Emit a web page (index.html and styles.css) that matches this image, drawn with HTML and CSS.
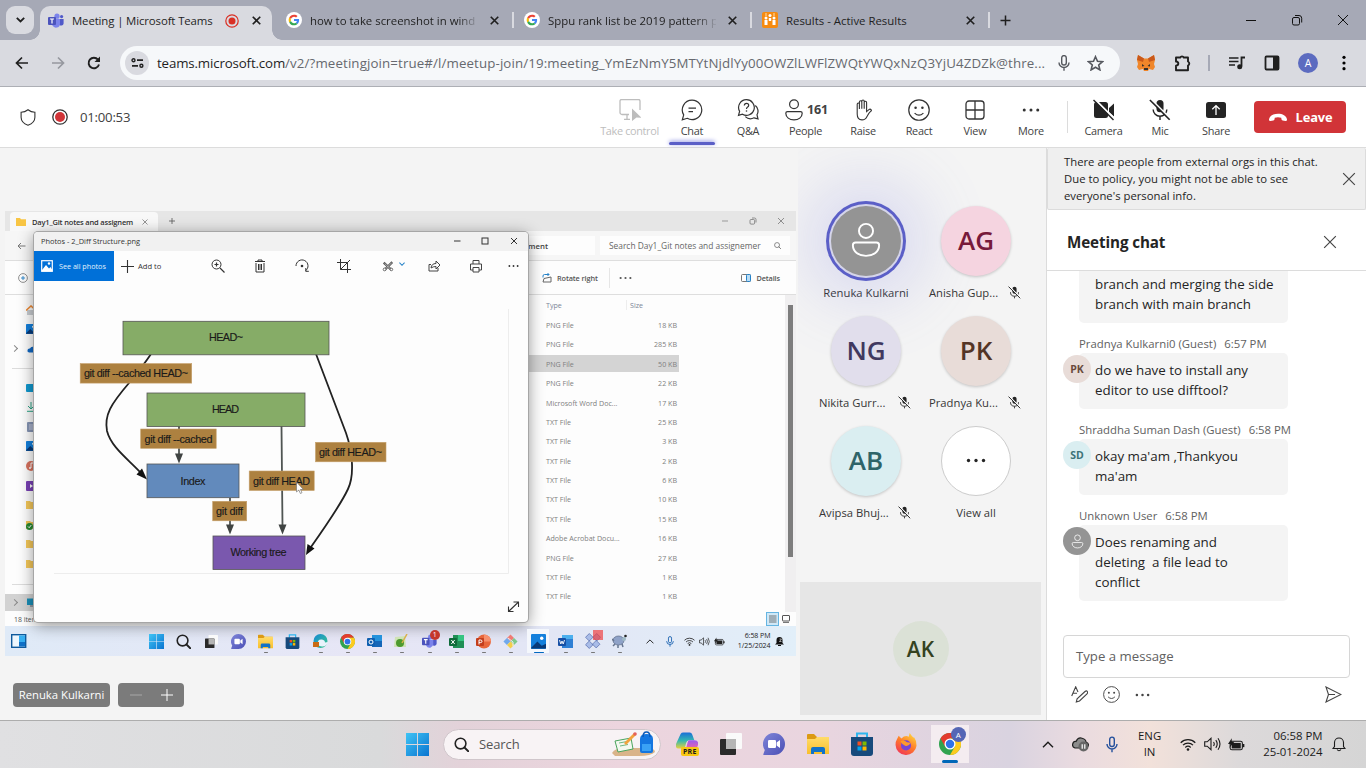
FILE: index.html
```html
<!DOCTYPE html>
<html lang="en">
<head>
<meta charset="utf-8">
<title>Meeting | Microsoft Teams</title>
<link rel="stylesheet" href="styles.css">
</head>
<body>
<svg class="sprite" width="0" height="0">
  <defs>
    <linearGradient id="winGrad" x1="0" y1="0" x2="1" y2="1"><stop offset="0" stop-color="#3fc4f5"/><stop offset="1" stop-color="#0a74d0"/></linearGradient>
    <linearGradient id="meetGrad" x1="0" y1="0" x2="1" y2="1"><stop offset="0" stop-color="#7f85d8"/><stop offset="1" stop-color="#4a4fb5"/></linearGradient>
    <linearGradient id="folderGrad" x1="0" y1="0" x2="0" y2="1"><stop offset="0" stop-color="#ffdc6a"/><stop offset="1" stop-color="#f9bf2c"/></linearGradient>
    <linearGradient id="foxGrad" x1="0.8" y1="0" x2="0.2" y2="1"><stop offset="0" stop-color="#ffd83d"/><stop offset=".5" stop-color="#ff7a2a"/><stop offset="1" stop-color="#f0325a"/></linearGradient>
    <linearGradient id="edgeGrad" x1="0" y1="0" x2="1" y2="1"><stop offset="0" stop-color="#1688d4"/><stop offset="1" stop-color="#3bc98a"/></linearGradient>
  </defs>
  <symbol id="google" viewBox="-12 -12 72 72"><circle cx="24" cy="24" r="36" fill="#fff"/><path fill="#EA4335" d="M24 9.5c3.54 0 6.71 1.22 9.21 3.6l6.85-6.85C35.9 2.38 30.47 0 24 0 14.62 0 6.51 5.38 2.56 13.22l7.98 6.19C12.43 13.72 17.74 9.5 24 9.5z"/><path fill="#4285F4" d="M46.98 24.55c0-1.57-.15-3.09-.38-4.55H24v9.02h12.94c-.58 2.96-2.26 5.48-4.78 7.18l7.73 6c4.51-4.18 7.09-10.36 7.09-17.65z"/><path fill="#FBBC05" d="M10.53 28.59c-.48-1.45-.76-2.99-.76-4.59s.27-3.14.76-4.59l-7.98-6.19C.92 16.46 0 20.12 0 24c0 3.88.92 7.54 2.56 10.78l7.97-6.19z"/><path fill="#34A853" d="M24 48c6.48 0 11.93-2.13 15.89-5.81l-7.73-6c-2.15 1.45-4.92 2.3-8.16 2.3-6.26 0-11.57-4.22-13.47-9.91l-7.98 6.19C6.51 42.62 14.62 48 24 48z"/></symbol>
  <symbol id="teams" viewBox="0 0 16 16"><circle cx="9" cy="3.2" r="2.6" fill="#7b83eb"/><circle cx="13.6" cy="3.6" r="1.6" fill="#5059c9"/><path d="M11 6h4.6v4.4a2.5 2.5 0 0 1-4.6 1z" fill="#5059c9"/><path d="M4.5 6H12v5a4 4 0 0 1-7.5 1.6z" fill="#7b83eb"/><rect x="0" y="4" width="8" height="8" rx="1" fill="#4b53bc"/><path d="M2 6h4M4 6v4.4" stroke="#fff" stroke-width="1.2"/></symbol>
  <symbol id="x" viewBox="0 0 12 12"><path d="M1 1l10 10M11 1L1 11" fill="none" stroke="currentColor"/></symbol>
  <symbol id="micoff" viewBox="0 0 20 20"><rect x="6.8" y="1" width="6.4" height="11" rx="3.2" fill="#242424"/><path d="M3.8 9.5a6.2 6.2 0 0 0 12.4 0M10 15.8V19" fill="none" stroke="#242424" stroke-width="1.3"/><path d="M2 0.4L19.8 18.2" stroke="#fff" stroke-width="1.6"/><path d="M.8.9l18 18" stroke="#242424" stroke-width="1.5"/></symbol>
  <symbol id="person" viewBox="0 0 20 22"><circle cx="10" cy="5.3" r="4.4" fill="none" stroke="currentColor" stroke-width="1.2"/><path d="M3.5 12.6h13q1.7 0 1.7 1.7c0 4-3.6 6.6-8.2 6.6s-8.2-2.600-8.200-6.600q0-1.700 1.700-1.700z" fill="none" stroke="currentColor" stroke-width="1.2"/></symbol>
  <symbol id="dots" viewBox="0 0 16 4"><circle cx="2" cy="2" r="1.35" fill="currentColor"/><circle cx="8" cy="2" r="1.35" fill="currentColor"/><circle cx="14" cy="2" r="1.35" fill="currentColor"/></symbol>
  <symbol id="smile" viewBox="0 0 20 20"><circle cx="10" cy="10" r="9.300" fill="none" stroke="currentColor" stroke-width="1.1"/><circle cx="6.900" cy="8" r="1.150" fill="currentColor"/><circle cx="13.100" cy="8" r="1.150" fill="currentColor"/><path d="M6 12.800q4 3.800 8 0" fill="none" stroke="currentColor" stroke-width="1.100"/></symbol>
  <symbol id="windows" viewBox="0 0 24 24"><path d="M0 0h11.500v11.500H0zM12.500 0H24v11.500H12.500zM0 12.500h11.500V24H0zM12.500 12.500H24V24H12.500z" fill="url(#winGrad)"/></symbol>
  <symbol id="lens" viewBox="0 0 16 16"><circle cx="7" cy="7" r="5.700" fill="none" stroke="currentColor" stroke-width="1.700"/><path d="M11.200 11.200l4 4" stroke="currentColor" stroke-width="1.900" stroke-linecap="round"/></symbol>
  <symbol id="taskview" viewBox="0 0 22 22"><rect x="6" y="0" width="16" height="16" rx="1" fill="#fafafa"/><rect x="0" y="6" width="16" height="16" rx="1" fill="#2a2a2a"/><path d="M6 6h10v10H6z" fill="#b5b5b5"/></symbol>
  <symbol id="meet" viewBox="0 0 22 22"><path d="M11 0a11 11 0 0 1 0 22H1q-1 0-.6-1L1.800 17A11 11 0 0 1 11 0z" fill="url(#meetGrad)"/><rect x="5" y="7" width="8" height="8" rx="1.300" fill="#fff"/><path d="M13.600 9.500L17 7v8l-3.400-2.500z" fill="#fff"/></symbol>
  <symbol id="folder" viewBox="0 0 22 22"><path d="M0 2q0-1 1-1h6l3 3h11q1 0 1 1v5H0z" fill="#dc9a13"/><path d="M0 6h8l2-2h12v17H0z" fill="url(#folderGrad)"/><path d="M4 21v-5q0-2 2-2h10q2 0 2 2v5h-3v-2H7v2z" fill="#1272c8"/></symbol>
  <symbol id="store" viewBox="0 0 22 24"><path d="M6 6V1.500h10V6" fill="none" stroke="#2fb5ee" stroke-width="2"/><path d="M0 5h22v16q0 3-3 3H3q-3 0-3-3z" fill="#174a7c"/><path d="M6.500 9.500h4v4h-4z" fill="#f25022"/><path d="M11.500 9.500h4v4h-4z" fill="#7fba00"/><path d="M6.500 14.500h4v4h-4z" fill="#00a4ef"/><path d="M11.500 14.500h4v4h-4z" fill="#ffb900"/></symbol>
  <symbol id="chrome" viewBox="0 0 24 24"><circle cx="12" cy="12" r="12" fill="#30a350"/><path d="M12 12V6h10.400A12 12 0 0 0 1.600 6l5.200 9z" fill="#e33b2e"/><path d="M12 6h10.400A12 12 0 0 1 12 24l5.200-9z" fill="#fccb1e"/><circle cx="12" cy="12" r="6" fill="#fff"/><circle cx="12" cy="12" r="4.600" fill="#2f73e8"/></symbol>
  <symbol id="wifi" viewBox="0 0 16 13"><path d="M.7 4.700a10.400 10.400 0 0 1 14.600 0M3 7.200a7 7 0 0 1 10 0M5.300 9.500a3.900 3.900 0 0 1 5.400 0" fill="none" stroke="currentColor" stroke-width="1.200"/><circle cx="8" cy="11.500" r="1.300" fill="currentColor"/></symbol>
  <symbol id="speaker" viewBox="0 0 17 14"><path d="M.7 4.800h2.500L7 1.300v11.400L3.200 9.200H.7z" fill="none" stroke="currentColor" stroke-width="1.100"/><path d="M9.500 5q1.500 2 0 4M11.800 3.200q2.800 3.800 0 7.600M14 1.200q4 5.800 0 11.600" fill="none" stroke="currentColor" stroke-width="1.100"/></symbol>
  <symbol id="battery" viewBox="0 0 16 12"><rect x="2" y="3" width="11.500" height="8" rx="1.700" fill="none" stroke="currentColor"/><rect x="3.500" y="4.500" width="8.500" height="5.200" fill="currentColor"/><path d="M14.500 5.500v3" stroke="currentColor" stroke-width="1.800"/><path d="M3.500 0L0 5.500h2.300L1.500 9 6 3.500H3.500z" fill="currentColor"/></symbol>
  <symbol id="bell" viewBox="0 0 14 16"><path d="M2.500 10.500V6.500a4.500 4.500 0 0 1 9 0v4l1.500 2H1zM5 13.500q2 2.500 4 0" fill="none" stroke="currentColor" stroke-width="1.100"/></symbol>
  <symbol id="mic" viewBox="0 0 12 16"><rect x="3.700" y=".6" width="4.600" height="9.400" rx="2.300" fill="none" stroke="currentColor" stroke-width="1.400"/><path d="M1 7.500a5 5 0 0 0 10 0M6 12.500v3.200" fill="none" stroke="currentColor" stroke-width="1.400"/></symbol>
  <symbol id="up" viewBox="0 0 10 6"><path d="M.7 5.300L5 1l4.300 4.300" fill="none" stroke="currentColor" stroke-width="1.200"/></symbol>
  <symbol id="pic" viewBox="0 0 14 14"><rect width="14" height="14" rx="1" fill="#1480dc"/><path d="M0 13l6-6 4 4 4-2v4.500H0z" fill="#083a78"/><circle cx="10" cy="4" r="1.600" fill="#fff"/></symbol>
</svg>

<div class="screen">
  <header class="tabstrip">
    <button class="tab-search"><svg width="9" height="6" viewBox="0 0 9 6"><path d="M.8.8l3.700 3.700L8.200.8" fill="none" stroke="#1f1f1f" stroke-width="1.800"/></svg></button>
    <div class="tab active"><svg class="fav"><use href="#teams"/></svg><span class="tab-title t1">Meeting | Microsoft Teams</span><svg class="rec" width="14" height="14" viewBox="0 0 14 14"><circle cx="7" cy="7" r="6.200" fill="none" stroke="#d93025" stroke-width="1.200"/><circle cx="7" cy="7" r="3.500" fill="#d93025"/></svg><svg class="tx"><use href="#x"/></svg></div>
    <div class="tab"><svg class="fav"><use href="#google"/></svg><span class="tab-title fade">how to take screenshot in wind</span><svg class="tx"><use href="#x"/></svg></div>
    <div class="tab"><svg class="fav"><use href="#google"/></svg><span class="tab-title fade">Sppu rank list be 2019 pattern p</span><svg class="tx"><use href="#x"/></svg></div>
    <div class="tab"><svg class="fav" viewBox="0 0 16 16"><rect width="16" height="16" rx="2" fill="#f68b10"/><path d="M4 1v3M12 1v3" stroke="#ffe0b0" stroke-width="1"/><circle cx="4" cy="6" r="1.500" fill="#fff"/><circle cx="8" cy="3.500" r="1.500" fill="#fff"/><circle cx="12" cy="6" r="1.500" fill="#fff"/><path d="M2.500 8h3v5h-3zM6.800 6h2.400v3H6.800zM10.500 8h3v5h-3z" fill="#fff"/></svg><span class="tab-title t4">Results - Active Results</span><svg class="tx"><use href="#x"/></svg></div>
    <svg class="newtab" width="11" height="11" viewBox="0 0 11 11"><path d="M5.500.5v10M.5 5.500h10" stroke="#1f1f1f" stroke-width="1.500"/></svg>
    <div class="wincontrols">
      <svg viewBox="0 0 12 12"><path d="M1 6.500h10" stroke="#111"/></svg>
      <svg viewBox="0 0 12 12"><rect x="1.500" y="3.500" width="7" height="7.500" rx="1.500" fill="none" stroke="#111"/><path d="M4 1.500h4q2.700 0 2.700 2.700V8.500" fill="none" stroke="#111"/></svg>
      <svg viewBox="0 0 12 12"><path d="M1 1l10 10M11 1L1 11" stroke="#111"/></svg>
    </div>
  </header>

  <div class="toolbar">
    <div class="nav">
      <svg viewBox="0 0 16 16"><path d="M14 8H2.500M8 2.500L2.500 8 8 13.500" fill="none" stroke="#1f1f1f" stroke-width="1.700"/></svg>
      <svg viewBox="0 0 16 16"><path d="M2 8h11.500M8 2.500L13.500 8 8 13.500" fill="none" stroke="#96989f" stroke-width="1.700"/></svg>
      <svg viewBox="0 0 16 16"><path d="M13 9.500A5.300 5.300 0 1 1 12 4.600" fill="none" stroke="#1f1f1f" stroke-width="1.900"/><path d="M14 1.500V7H8.500z" fill="#1f1f1f"/></svg>
    </div>
    <div class="omnibox">
      <span class="siteinfo"><svg width="13" height="10" viewBox="0 0 13 10"><circle cx="2.500" cy="2.200" r="1.500" fill="none" stroke="#222" stroke-width="1.400"/><path d="M6 2.200h6M1 7.800h6" stroke="#222" stroke-width="1.700"/><circle cx="10.400" cy="7.800" r="1.500" fill="none" stroke="#222" stroke-width="1.400"/></svg></span>
      <span class="url"><b>teams.microsoft.com</b>/v2/?meetingjoin=true#/l/meetup-join/19:meeting_YmEzNmY5MTYtNjdlYy00OWZlLWFlZWQtYWQxNzQ3YjU4ZDZk@thre...</span>
      <svg class="omic" width="12" height="16"><use href="#mic"/></svg>
      <svg class="star" width="17" height="16" viewBox="0 0 17 16"><path d="M8.500 1.700l2 4.600 5 .4-3.800 3.300 1.200 4.900-4.400-2.600-4.400 2.600 1.200-4.900L1.500 6.700l5-.4z" fill="none" stroke="#55585e" stroke-width="1.600"/></svg>
    </div>
    <div class="exts">
      <svg width="18" height="16" viewBox="0 0 18 16"><path d="M1 0l6 3.500h4L17 0l1 5-1 4 1 3-2 3-4-1-1 2H7l-1-2-4 1-2-3 1-3-1-4z" fill="#f0862a"/><path d="M1 0l6 3.500L6 7 0 5zM17 0l-6 3.500L12 7l6-2z" fill="#c9581a"/><path d="M5 9l2.500 2L5 11.500zM13 9l-2.500 2 2.500.5zM7 13h4v2H7z" fill="#33302e"/></svg>
      <svg width="18" height="18" viewBox="0 0 18 18"><path d="M2 3.500h4.200a2 2 0 0 1 3.600 0H14v4a2.200 2.200 0 0 1 0 4v4.700H2v-4.500q2.300-.2 2.300-2.100T2 7.500z" fill="none" stroke="#1f1f1f" stroke-width="1.900" stroke-linejoin="round"/></svg>
      <i class="vsep"></i>
      <svg width="17" height="14" viewBox="0 0 17 14"><path d="M1 2h9.500M1 5.500h9.500M1 9h6" stroke="#1f1f1f" stroke-width="1.700"/><path d="M13.500 10.500V1.500H17" fill="none" stroke="#1f1f1f" stroke-width="1.800"/><circle cx="11.700" cy="10.800" r="2.500" fill="#1f1f1f"/></svg>
      <svg width="16" height="16" viewBox="0 0 16 16"><rect x="1.500" y="1.500" width="13" height="13" rx="1" fill="none" stroke="#1f1f1f" stroke-width="1.800"/><path d="M9 1h5.500v14H9z" fill="#1f1f1f"/></svg>
      <span class="profile">A</span>
      <svg width="4" height="16" viewBox="0 0 4 16"><circle cx="2" cy="2.300" r="1.600"/><circle cx="2" cy="8" r="1.600"/><circle cx="2" cy="13.700" r="1.600"/></svg>
    </div>
  </div>

  <div class="meetbar">
    <svg class="shield" width="16" height="17" viewBox="0 0 16 17"><path d="M8 .7q3 2.400 6.900 2.500v5q0 5.500-6.900 8-6.900-2.500-6.900-8v-5Q5 3.100 8 .7z" fill="none" stroke="#333" stroke-width="1.100"/></svg>
    <svg class="recording" width="16" height="16" viewBox="0 0 16 16"><circle cx="8" cy="8" r="7.200" fill="none" stroke="#333" stroke-width="1.300"/><circle cx="8" cy="8" r="5" fill="#d13438"/></svg>
    <span class="clock">01:00:53</span>
    <div class="controls">
      <div class="ctl w77 off"><svg viewBox="0 0 22 22"><path d="M10 15.500H3a2 2 0 0 1-2-2V2a1.500 1.500 0 0 1 1.500-1.500h17A1.500 1.500 0 0 1 21 2v9M8 16v4M5 20.300h6" fill="none" stroke="#bdbdbd" stroke-width="1.300"/><path d="M13 9.500l9.500 9.300-5-.3L13 22z" fill="#bdbdbd"/></svg><span>Take control</span></div>
      <div class="ctl w48 on"><svg viewBox="0 0 22 22"><path d="M11 1.200a9.700 9.700 0 1 1-4.800 18.100L1.300 20.800l1.400-4.900A9.700 9.700 0 0 1 11 1.200zM7.500 9.200h7.500M7.500 12.700h4.500" fill="none" stroke="#333" stroke-width="1.200"/></svg><span>Chat</span></div>
      <div class="ctl w64"><svg viewBox="0 0 22 22"><path d="M9.500.7a7.800 7.800 0 1 1-4 14.500l-4 1.100L2.600 12.300A7.800 7.800 0 0 1 9.500.7zM18.300 6.500a7.200 7.200 0 0 1 1.700 9.300l1 4-3.900-1a7.500 7.500 0 0 1-8.800-1.200" fill="none" stroke="#333" stroke-width="1.200"/><path d="M7.300 6.500q0-2.200 2.200-2.200t2.200 2q0 1.200-1.300 2-.9.600-.9 1.700" fill="none" stroke="#333" stroke-width="1.200"/><circle cx="9.500" cy="12" r=".8" fill="#333"/></svg><span>Q&amp;A</span></div>
      <div class="ctl w51 people"><div class="count"><svg><use href="#person"/></svg><b>161</b></div><span>People</span></div>
      <div class="ctl w64"><svg viewBox="0 0 22 22"><path d="M5.200 12V5.200q0-1.200 1.100-1.200t1.100 1.200V10 3q0-1.300 1.200-1.300T9.800 3v6.700V2.200Q9.800 1 11 1t1.200 1.200v7.600V3.400q0-1.200 1.200-1.200t1.200 1.200v9.200l2.300-2q1.300-.9 2.300.2.600.7-.4 1.400-1.700 1.400-3.800 5.200-1.700 3.500-5 3.500-4.800 0-4.800-6z" fill="none" stroke="#333" stroke-width="1.100"/></svg><span>Raise</span></div>
      <div class="ctl w48"><svg><use href="#smile"/></svg><span>React</span></div>
      <div class="ctl w64"><svg viewBox="0 0 22 22"><rect x="2" y="2" width="18" height="18" rx="3" fill="none" stroke="#333" stroke-width="1.300"/><path d="M11 2v18M2 11h18" stroke="#333" stroke-width="1.300"/></svg><span>View</span></div>
      <div class="ctl w48"><svg class="more"><use href="#dots"/></svg><span>More</span></div>
      <i class="csep"></i>
      <div class="ctl w49"><svg viewBox="0 0 22 22"><rect x="1" y="3" width="14" height="16" rx="2.500" fill="#242424"/><path d="M16 9l5-4.500v13L16 13z" fill="#242424"/><path d="M1.500 0l21 21" stroke="#fff" stroke-width="2"/><path d="M.5 1l20 20" stroke="#242424" stroke-width="1.500"/></svg><span>Camera</span></div>
      <div class="ctl w64"><svg><use href="#micoff"/></svg><span>Mic</span></div>
      <div class="ctl w48"><svg viewBox="0 0 22 22"><rect x="1" y="3" width="20" height="16" rx="2.500" fill="#242424"/><path d="M11 16V7M7.300 10.300L11 6.600l3.700 3.700" fill="none" stroke="#fff" stroke-width="1.300"/></svg><span>Share</span></div>
      <button class="leave"><svg width="20" height="9" viewBox="0 0 20 9"><path d="M1 6.500C1.500 2.700 5.500.8 10 .8s8.500 1.900 9 5.700q.1 1.700-1.600 1.500l-2.700-.4q-1.200-.2-1.300-1.500l-.1-1.300q-3.300-1-6.600 0l-.1 1.300q-.1 1.300-1.300 1.500L2.600 8Q.9 8.200 1 6.500z" fill="#fff"/></svg>Leave</button>
    </div>
  </div>

  <main class="main">
    <section class="stage">
      <div class="shared">
        <div class="explorer">
          <div class="ex-tabs">
            <div class="ex-tab"><svg width="10" height="9" viewBox="0 0 10 9"><path d="M0 1h4l1 1.300h5V9H0z" fill="#f8c544"/></svg><span>Day1_Git notes and assignem</span><svg width="6" height="6"><use href="#x"/></svg></div>
            <svg class="ex-plus" width="6" height="6" viewBox="0 0 6 6"><path d="M3 0v6M0 3h6" stroke="#555" stroke-width=".8"/></svg>
            <div class="ex-win"><svg viewBox="0 0 8 8"><path d="M1 4h6" stroke="#999"/></svg><svg viewBox="0 0 8 8"><rect x="1" y="2.500" width="4.600" height="4.600" rx="1" fill="none" stroke="#777" stroke-width=".8"/><path d="M3 1h2.500Q7 1 7 2.500v3" fill="none" stroke="#777" stroke-width=".8"/></svg><svg viewBox="0 0 8 8"><path d="M1 1l6 6M7 1L1 7" stroke="#777" stroke-width=".8"/></svg></div>
          </div>
          <div class="ex-addr"><svg class="ex-back" width="9" height="8" viewBox="0 0 9 8"><path d="M8.500 4H1M4 1L1 4l3 3" fill="none" stroke="#777"/></svg><div class="crumb">ment</div><div class="find">Search Day1_Git notes and assignemer<svg width="7" height="7"><use href="#lens"/></svg></div></div>
          <div class="ex-cmd"><svg class="ex-new" width="10" height="10" viewBox="0 0 10 10"><circle cx="5" cy="5" r="4.400" fill="none" stroke="#777" stroke-width=".8"/><path d="M5 3v4M3 5h4" stroke="#2582c8" stroke-width=".9"/></svg><svg class="rot" width="10" height="10" viewBox="0 0 10 10"><path d="M1 4.500V3q0-1.500 1.500-1.500H7M5.500 0L7 1.500 5.500 3" fill="none" stroke="#2582c8"/><path d="M1 9l1-3.500L9 4v5z" fill="none" stroke="#666"/></svg><span>Rotate right</span><i></i><svg class="cdots" width="13" height="4"><use href="#dots"/></svg><svg class="det" width="10" height="8" viewBox="0 0 10 8"><rect x=".5" y=".5" width="9" height="7" rx="1" fill="none" stroke="#666" stroke-width=".9"/><rect x="5.500" y=".5" width="4" height="7" rx="1" fill="#b9dcf4" stroke="#2582c8"/></svg><span>Details</span></div>
          <div class="ex-body">
            <div class="side">
              <div class="sr"><svg viewBox="0 0 10 10"><path d="M1 5v5h8V5" fill="#c9cdd2"/><path d="M0 5.500L5 1l5 4.500" fill="none" stroke="#ee8a35" stroke-width="1.600"/></svg></div>
              <div class="sr"><svg><use href="#pic"/></svg></div>
              <div class="sr arrow"><svg viewBox="0 0 10 10"><path d="M2 8.500q-2-.5-1.500-2.500T3 4.500Q4 2 7 3t3 4v1.500z" fill="#1068c4"/></svg></div>
              <hr>
              <div class="sr"><svg viewBox="0 0 10 10"><rect y="1" width="10" height="8" rx="1" fill="#1199cf"/></svg></div>
              <div class="sr"><svg viewBox="0 0 10 10"><path d="M5 0v6M2 4l3 3 3-3M1 9.300h8" fill="none" stroke="#2aa586"/></svg></div>
              <div class="sr"><svg viewBox="0 0 10 10"><rect x="1" width="9" height="10" rx="1" fill="#8695b4"/><path d="M3 3h5M3 5h5M3 7h5" stroke="#dde" stroke-width=".8"/></svg></div>
              <div class="sr"><svg><use href="#pic"/></svg></div>
              <div class="sr"><svg viewBox="0 0 10 10"><circle cx="5" cy="5" r="5" fill="#d8735f"/><path d="M5 7V2h2" stroke="#fff" fill="none"/><circle cx="4" cy="7" r="1" fill="#fff"/></svg></div>
              <div class="sr"><svg viewBox="0 0 10 10"><rect width="10" height="10" rx="1" fill="#7840b4"/><path d="M4 3l3 2-3 2z" fill="#fff"/></svg></div>
              <div class="sr"><svg viewBox="0 0 10 10"><path d="M0 1h4l1 1h5v7H0z" fill="#f4c759"/></svg></div>
              <div class="sr"><svg viewBox="0 0 10 10"><path d="M0 1h4l1 1h5v7H0z" fill="#f4c759"/><circle cx="3.500" cy="6.500" r="3.500" fill="#278a33"/><path d="M2 6.500l1.200 1.200L5.300 5" stroke="#fff" fill="none"/></svg></div>
              <div class="sr"><svg viewBox="0 0 10 10"><path d="M0 1h4l1 1h5v7H0z" fill="#f4c759"/></svg></div>
              <div class="sr"><svg viewBox="0 0 10 10"><path d="M0 1h4l1 1h5v7H0z" fill="#f4c759"/></svg></div>
              <hr>
              <div class="sr arrow sel"><svg viewBox="0 0 10 10"><rect y="1.500" width="10" height="6.500" fill="#1a8fb8"/><path d="M3 9h5" stroke="#567"/></svg></div>
            </div>
            <div class="files">
              <div class="fr head"><span>Type</span><span>Size</span></div>
              <div class="fr"><span>PNG File</span><span>18 KB</span></div>
              <div class="fr"><span>PNG File</span><span>285 KB</span></div>
              <div class="fr sel"><span>PNG File</span><span>50 KB</span></div>
              <div class="fr"><span>PNG File</span><span>22 KB</span></div>
              <div class="fr"><span>Microsoft Word Doc...</span><span>17 KB</span></div>
              <div class="fr"><span>TXT File</span><span>25 KB</span></div>
              <div class="fr"><span>TXT File</span><span>3 KB</span></div>
              <div class="fr"><span>TXT File</span><span>2 KB</span></div>
              <div class="fr"><span>TXT File</span><span>6 KB</span></div>
              <div class="fr"><span>TXT File</span><span>10 KB</span></div>
              <div class="fr"><span>TXT File</span><span>15 KB</span></div>
              <div class="fr"><span>Adobe Acrobat Docu...</span><span>16 KB</span></div>
              <div class="fr"><span>PNG File</span><span>27 KB</span></div>
              <div class="fr"><span>TXT File</span><span>1 KB</span></div>
              <div class="fr"><span>TXT File</span><span>1 KB</span></div>
            </div>
            <div class="scroll"><i></i></div>
          </div>
          <div class="ex-status"><span>18 items</span><span class="views"><svg width="13" height="14" viewBox="0 0 13 14"><rect x=".5" y=".5" width="12" height="13" fill="#cfe8f7" stroke="#65b5e2"/><path d="M3 4h7.500M3 6h7.500M3 8h7.500M3 10h7.500" stroke="#555" stroke-width=".8"/></svg><svg width="8" height="8" viewBox="0 0 8 8"><rect x=".5" y=".5" width="7" height="5.500" rx=".5" fill="none" stroke="#555"/><path d="M1 7.500h6" stroke="#555" stroke-width=".8"/></svg></span></div>
        </div>
        <div class="photos">
          <div class="ph-title"><span>Photos - 2_Diff Structure.png</span><div class="ph-win"><svg viewBox="0 0 8 8"><path d="M1 4h6.500" stroke="#333"/></svg><svg viewBox="0 0 8 8"><rect x="1" y="1" width="6" height="6" fill="none" stroke="#333"/></svg><svg viewBox="0 0 8 8"><path d="M1 1l6 6M7 1L1 7" stroke="#333"/></svg></div></div>
          <div class="ph-bar">
            <div class="seeall"><svg width="12" height="12" viewBox="0 0 12 12"><rect x=".7" y=".7" width="10.600" height="10.600" fill="none" stroke="#fff" stroke-width="1.200"/><path d="M1 10l4-5 3 3.500L9.500 7l1.800 3v1.300H1z" fill="#fff"/><circle cx="8" cy="3.500" r="1.200" fill="#fff"/></svg><span>See all photos</span></div>
            <svg class="plus" width="13" height="13" viewBox="0 0 13 13"><path d="M6.500 0v13M0 6.500h13" stroke="#333" stroke-width="1.100"/></svg><span class="addto">Add to</span>
            <div class="tools">
              <svg viewBox="0 0 14 14"><circle cx="5.500" cy="5.500" r="4.500" fill="none" stroke="#333"/><path d="M9 9l4.500 4.500M5.500 3.500v4M3.500 5.500h4" stroke="#333" stroke-width="1.200"/></svg>
              <svg viewBox="0 0 14 14"><path d="M2 2.500h10M5 2.500V1h4v1.500M3 4v9h8V4M5.500 5v6M7 5v6M8.500 5v6" fill="none" stroke="#333"/></svg>
              <svg viewBox="0 0 14 14"><path d="M1 7a6 6 0 1 1 9.500 4.800M10.800 9v3.300h3" fill="none" stroke="#333"/><circle cx="7" cy="7" r="1.300" fill="#333"/></svg>
              <svg viewBox="0 0 14 14"><path d="M3.500 0v10.500H14M0 3.500h10.500V14M13 1L3.500 10.500" fill="none" stroke="#333"/></svg>
              <svg class="edit" viewBox="0 0 14 14"><path d="M2 3l9 8.500M12 2.500L3 11.500" stroke="#555" stroke-width="2.600"/><path d="M3 4l8 7.500M11.500 3L3.500 11" stroke="#ddd" stroke-width=".8"/><circle cx="3" cy="11" r="1.600" fill="#fff" stroke="#555"/><circle cx="11" cy="11" r="1.500" fill="#fff" stroke="#555"/></svg>
              <svg class="chev" viewBox="0 0 7 4"><path d="M.5.5l3 3 3-3" fill="none" stroke="#2582c8" stroke-width="1.200"/></svg>
              <svg viewBox="0 0 14 14"><path d="M4 5.500H2V12h9V9M4 9q.5-4.500 5-4.500V2l4 4-4 4V7.500Q6 7.500 4 9z" fill="none" stroke="#444"/></svg>
              <svg viewBox="0 0 14 14"><path d="M4 5V1.500h6V5M4 11H1.500V5h11v6H10M4 8.500h6v4.500H4z" fill="none" stroke="#444"/></svg>
              <svg viewBox="0 0 16 4"><use href="#dots"/></svg>
            </div>
          </div>
          <svg class="diagram" width="494" height="341" viewBox="34 281 494 341">
            <path d="M54 573.500H508.500V309" fill="none" stroke="#ededed"/>
            <g fill="none" stroke="#222" stroke-width="1.800">
              <path d="M151 354C147 360 138 372 129 383 111 404 104 415 107 431 111 447 128 459 141 473"/>
              <path d="M316 354L346 433C352 450 355 474 348 489 341 504 323 530 311 547"/>
              <path d="M179 426v28M230 498v27M281.500 426L282.500 526" stroke="#505553"/>
            </g>
            <path d="M147 479.500L136.500 474.500 142 468.500zM306 555L307.500 544 314.500 548.500z" fill="#111"/>
            <path d="M175 453.500h8l-4 10zM226 524.500h8l-4 10zM278.500 524.500h8l-4 10z" fill="#404443"/>
            <g stroke="#555" stroke-width=".8">
              <rect x="123" y="321.300" width="206" height="33.500" fill="#86ac67"/>
              <rect x="147" y="393" width="158" height="33.500" fill="#86ac67"/>
              <rect x="147" y="464" width="92" height="33.700" fill="#628abc"/>
              <rect x="213" y="536" width="92" height="33.500" fill="#7a58ae"/>
            </g>
            <g fill="#ad8140" stroke="#c5a06b" stroke-width=".6">
              <rect x="80.200" y="363.600" width="111.500" height="19.500"/>
              <rect x="140.700" y="429" width="75.500" height="19.300"/>
              <rect x="249.200" y="471" width="65" height="19.500"/>
              <rect x="212.700" y="501.300" width="34" height="19.500"/>
              <rect x="315.500" y="442.300" width="70.500" height="19.500"/>
            </g>
            <g class="dlabels">
              <text x="226" y="341.200" textLength="34">HEAD~</text>
              <text x="136" y="377" textLength="104">git diff --cached HEAD~</text>
              <text x="225.500" y="412.500" textLength="27">HEAD</text>
              <text x="178.500" y="442.500" textLength="68">git diff --cached</text>
              <text x="193" y="484.500" textLength="25">Index</text>
              <text x="281.500" y="484.500" textLength="57">git diff HEAD</text>
              <text x="229.500" y="515" textLength="27">git diff</text>
              <text x="350.500" y="456" textLength="63">git diff HEAD~</text>
              <text x="258.500" y="556" textLength="56">Working tree</text>
            </g>
            <path d="M296.500 482v10l2.300-2 1.600 3.500 1.600-.8-1.600-3.200h3z" fill="#fff" stroke="#777" stroke-width=".7"/>
            <path d="M508.500 611.500L518.500 602M513.500 602h5v5M508.500 606.500v5h5" fill="none" stroke="#333" stroke-width="1.100"/>
          </svg>
        </div>
        <div class="inner-bar">
          <svg class="widget" width="16" height="14" viewBox="0 0 16 14"><rect x=".7" y=".7" width="14" height="12.600" fill="#eef7fd" stroke="#0f5a9c" stroke-width="1.400"/><path d="M8 1.400h6V8H8z" fill="#35aef0"/><path d="M8 8h6v4.600H8z" fill="#0f6fc5"/></svg>
          <div class="ib-icons">
            <span><svg><use href="#windows"/></svg></span>
            <span><svg><use href="#lens"/></svg></span>
            <span><svg class="tv"><use href="#taskview"/></svg></span>
            <span><svg><use href="#meet"/></svg></span>
            <span class="run"><svg><use href="#folder"/></svg></span>
            <span><svg><use href="#store"/></svg></span>
            <span class="run"><svg viewBox="0 0 15 15"><circle cx="7.500" cy="7" r="7" fill="url(#edgeGrad)"/><path d="M5 10q-1-5 4-4.500 3 .5 3 3l3-.5q-1 4-5 4.500-4 .5-5-2.500z" fill="#e8f3fb"/><path d="M0 8h6v5H0z" fill="#c96b14"/></svg></span>
            <span class="run"><svg><use href="#chrome"/></svg></span>
            <span class="run"><svg viewBox="0 0 15 15"><path d="M5 1h10v12H5z" fill="#2492dc"/><path d="M5 7h10v6H5z" fill="#1466b8"/><rect y="4" width="8" height="8" rx="1" fill="#0f5fb0"/><circle cx="4" cy="8" r="2" fill="none" stroke="#fff"/></svg></span>
            <span class="run"><svg viewBox="0 0 15 15"><path d="M1 3l10-1 1 11H0z" fill="#cfe3b5"/><circle cx="6" cy="9" r="4" fill="#4d9a2f"/><path d="M13 0L8 9" stroke="#d9b04a" stroke-width="1.500"/></svg></span>
            <span class="run"><svg><use href="#teams"/></svg><em>1</em></span>
            <span class="run"><svg viewBox="0 0 15 15"><path d="M4 1h11v13H4z" fill="#1f8f55"/><path d="M9 1h6v6H9z" fill="#35c481"/><rect y="4" width="8" height="8" rx="1" fill="#0f6b3a"/><path d="M2.300 6l3.400 4M5.700 6L2.300 10" stroke="#fff"/></svg></span>
            <span class="run"><svg viewBox="0 0 15 15"><circle cx="8" cy="7.500" r="7" fill="#e8663a"/><path d="M8 .5a7 7 0 0 1 7 7H8z" fill="#f7906c"/><rect y="4" width="8" height="8" rx="1" fill="#c43e1c"/><path d="M3 10.500V6h1.500q1.500 0 1.500 1.300T4.500 8.600H3" fill="none" stroke="#fff"/></svg></span>
            <span class="run"><svg viewBox="0 0 15 15"><g transform="rotate(45 7.500 7.500)"><rect x="2.500" y="2.500" width="5" height="5" fill="#ef7b73"/><rect x="7.500" y="2.500" width="5" height="5" fill="#7cc98b"/><rect x="2.500" y="7.500" width="5" height="5" fill="#72a9ec"/><rect x="7.500" y="7.500" width="5" height="5" fill="#f3cf4c"/></g><path d="M5 4l5 4v4" stroke="#eee" fill="none"/></svg></span>
            <span class="run cur"><svg><use href="#pic"/></svg></span>
            <span class="run"><svg viewBox="0 0 15 15"><path d="M4 1h11v13H4z" fill="#2e7fd4"/><path d="M4 1h11v4H4z" fill="#4cb0ee"/><rect y="4" width="8" height="8" rx="1" fill="#164fa5"/><path d="M1.500 6l1.300 4L4 7l1.200 3 1.300-4" fill="none" stroke="#fff" stroke-width=".9"/></svg></span>
            <span class="run"><svg class="dia" viewBox="0 0 15 15"><g fill="#a9bce8" stroke="#5a6fae" stroke-width=".7"><path d="M4 .5l3.500 3.500L4 7.500.5 4zM11 .5L14.500 4 11 7.500 7.500 4zM4 7.500L7.500 11 4 14.500.5 11zM10.500 7l3.500 3.500-3.500 3.500L7 10.500z"/></g></svg><b class="redsq"></b></span>
            <span class="run"><svg viewBox="0 0 15 15"><ellipse cx="6.500" cy="6.500" rx="5.500" ry="4.500" fill="#8fa2c8" stroke="#5c6a85" stroke-width=".7"/><circle cx="12" cy="5" r="2" fill="#9db9c4"/><circle cx="13.500" cy="2" r="1.300" fill="#222"/><path d="M3 10l-2 2M6 11v3M10 10l1 3M2 7L0 5" stroke="#66758f" stroke-width="1.500"/></svg></span>
          </div>
          <div class="ib-tray"><svg width="8" height="5"><use href="#up"/></svg><svg class="blue" width="8" height="11"><use href="#mic"/></svg><svg width="11" height="9"><use href="#wifi"/></svg><svg width="11" height="9"><use href="#speaker"/></svg><svg width="11" height="9"><use href="#battery"/></svg><p>6:58 PM<br>1/25/2024</p><svg class="ibell" width="9" height="10" viewBox="0 0 9 10"><path d="M1.500 7V4a3 3 0 0 1 6 0v3L9 8.500H0z" fill="#111"/><path d="M3 9.500h3" stroke="#111"/><path d="M4.500 3h2L4.500 5.500h2" stroke="#fff" fill="none" stroke-width=".6"/></svg></div>
        </div>
      </div>
      <div class="pills"><span class="pill">Renuka Kulkarni</span><span class="pill zoomer"><svg viewBox="0 0 12 12"><path d="M0 6h12" stroke="#a8a8a8"/></svg><svg viewBox="0 0 12 12"><path d="M0 6h12M6 0v12" stroke="#fff"/></svg></span></div>
    </section>

    <aside class="roster">
      <div class="people-grid">
        <div class="p"><span class="av speaking"><svg width="32" height="36"><use href="#person"/></svg></span><div class="nm">Renuka Kulkarni</div></div>
        <div class="p"><span class="av ag">AG</span><div class="nm cut">Anisha Gup...<svg><use href="#micoff"/></svg></div></div>
        <div class="p"><span class="av ng">NG</span><div class="nm cut">Nikita Gurr...<svg><use href="#micoff"/></svg></div></div>
        <div class="p"><span class="av pk">PK</span><div class="nm cut">Pradnya Ku...<svg><use href="#micoff"/></svg></div></div>
        <div class="p"><span class="av ab">AB</span><div class="nm cut">Avipsa Bhuj...<svg><use href="#micoff"/></svg></div></div>
        <div class="p"><span class="av all"><svg width="22" height="5"><use href="#dots"/></svg></span><div class="nm">View all</div></div>
      </div>
      <div class="selfview"><span>AK</span></div>
    </aside>

    <section class="chat">
      <div class="notice"><p>There are people from external orgs in this chat.<br>Due to policy, you might not be able to see<br>everyone's personal info.</p><svg><use href="#x"/></svg></div>
      <div class="chat-head"><h2>Meeting chat</h2><svg><use href="#x"/></svg></div>
      <div class="msgs">
        <div class="bubble clipped">branch and merging the side<br>branch with main branch</div>
        <div class="meta">Pradnya Kulkarni0 (Guest)<time>6:57 PM</time></div>
        <div class="bubble"><span class="mini mpk">PK</span>do we have to install any<br>editor to use difftool?</div>
        <div class="meta">Shraddha Suman Dash (Guest)<time>6:58 PM</time></div>
        <div class="bubble"><span class="mini msd">SD</span>okay ma'am ,Thankyou<br>ma'am</div>
        <div class="meta">Unknown User<time>6:58 PM</time></div>
        <div class="bubble"><span class="mini mun"><svg width="13" height="15"><use href="#person"/></svg></span>Does renaming and<br>deleting&nbsp; a file lead to<br>conflict</div>
      </div>
      <div class="composer">Type a message</div>
      <div class="compose-tools">
        <svg width="17" height="17" viewBox="0 0 17 17"><path d="M.7 10L4.700.8 7 6M2 7.200h4M14 5.500q1.500-1.200 2.300 0t-.3 2.300L8.500 15l-3.200 1 .8-3.200z" fill="none" stroke="#444" stroke-width="1.100"/></svg>
        <svg width="17" height="17" class="sm"><use href="#smile"/></svg>
        <svg width="15" height="4" class="sm"><use href="#dots"/></svg>
        <svg class="send" width="17" height="17" viewBox="0 0 17 17"><path d="M1 1l15 7.500L1 16l2.500-7.500zM3.500 8.500H10" fill="none" stroke="#444" stroke-width="1.100"/></svg>
      </div>
    </section>
  </main>

  <footer class="taskbar">
    <svg class="start" width="23" height="23"><use href="#windows"/></svg>
    <div class="search"><svg class="slens" width="15" height="15"><use href="#lens"/></svg><span>Search</span>
      <svg class="art" width="44" height="26" viewBox="0 0 44 26"><path d="M0 22q3-5 12-5h22q9 0 9 4-4 4-16 4H3z" fill="#d9b48a"/><path d="M3 10l16-3 2 11-15 3z" fill="#f3f8ef" stroke="#4aa45c"/><path d="M7 12l8-1.500M8 15l8-1.500" stroke="#70b782"/><path d="M12 12L22 2l2 2-10 10z" fill="#f2a23c"/><circle cx="23" cy="3" r="1.800" fill="#e4605a"/><path d="M28 20V8q0-5 6.500-5T41 8v12q0 2-2 2h-9q-2 0-2-2z" fill="#1476e0"/><path d="M31 6q0-5 3.500-5T38 6" fill="none" stroke="#0b59b8" stroke-width="1.500"/><path d="M30 13h9v7h-9z" fill="#3aa2f5"/></svg>
    </div>
    <div class="apps">
      <span><svg viewBox="0 0 24 26"><defs><linearGradient id="cpA" x1="0" y1="0" x2="0" y2="1"><stop offset="0" stop-color="#1b6fd8"/><stop offset=".5" stop-color="#34b8b0"/><stop offset="1" stop-color="#e8d23c"/></linearGradient><linearGradient id="cpB" x1="0" y1="0" x2="0" y2="1"><stop offset="0" stop-color="#9a5cf0"/><stop offset=".6" stop-color="#e865a8"/><stop offset="1" stop-color="#f59a4c"/></linearGradient></defs><path d="M5 2q1-1.500 3-1.500h7q2 0 2.700 2L20 9h-6q-2 0-3 3l-1.500 6H3q-4 0-3-5z" fill="url(#cpA)"/><path d="M14 9h6q5 0 4 5l-3 8q-.8 2-3 2h-7q-2 0-3-3 2 0 3-3l1.500-6q.7-3 1.500-3z" fill="url(#cpB)"/></svg><em>PRE</em></span>
      <span><svg><use href="#taskview"/></svg></span>
      <span><svg><use href="#meet"/></svg></span>
      <span><svg><use href="#folder"/></svg></span>
      <span><svg><use href="#store"/></svg></span>
      <span><svg viewBox="0 0 24 24"><path d="M2 7l2-4 3 3Q11 2 15 4l1-4q2 3 4 5l1 0q3 4 2.500 9A11.500 11.500 0 0 1 .6 13Q.5 9 2 7z" fill="url(#foxGrad)"/><circle cx="12" cy="13.500" r="5.500" fill="#7846d4"/><path d="M6 9q4-2 7 1 3 0 4 1-2 4-6 3-3-1-5-5z" fill="#ff9a2c"/></svg></span>
      <span class="open"><svg><use href="#chrome"/></svg><b>A</b></span>
    </div>
    <div class="tray">
      <svg class="tup" width="12" height="7"><use href="#up"/></svg>
      <svg class="cloud" width="17" height="16" viewBox="0 0 17 16"><path d="M3 12q-3-1-2.300-4T4 5.500Q6 1 10 2.200T14 6q3 1 2.300 4L8 12z" fill="#8c8c8c" stroke="#222" stroke-width="1.200"/><circle cx="11.500" cy="10.500" r="5" fill="#666"/><path d="M10.200 8.300v4.400M12.800 8.300v4.400" stroke="#fff" stroke-width="1.200"/></svg>
      <svg class="tmic" width="12" height="17"><use href="#mic"/></svg>
      <p class="lang">ENG<br>IN</p>
      <svg class="twifi" width="16" height="13"><use href="#wifi"/></svg>
      <svg class="tspk" width="17" height="14"><use href="#speaker"/></svg>
      <svg class="tbat" width="17" height="13"><use href="#battery"/></svg>
      <p class="date">06:58 PM<br>25-01-2024</p>
      <svg class="tbell" width="14" height="16"><use href="#bell"/></svg>
    </div>
  </footer>
</div>
</body>
</html>
```
FILE: styles.css
```css
* { box-sizing: border-box; }
body { margin: 0; font-family: "Open Sans", "Noto Sans", sans-serif; color: #242424; }
svg { display: block; flex: none; }
p, h2 { margin: 0; }
button { font: inherit; border: 0; padding: 0; }
.sprite { position: absolute; }
.screen { width: 1366px; height: 768px; display: flex; flex-direction: column; overflow: hidden; background: #fff; }

/* browser tabs */
.tabstrip { height: 40px; background: #a6a9b6; display: flex; align-items: center; font-size: 11.4px; color: #1f1f1f; }
.tab-search { width: 28px; height: 28px; margin: 0 6px; border-radius: 9px; background: #d9dae0; display: grid; place-items: center; }
.tab { position: relative; width: 238px; padding-left: 8px; display: flex; align-items: center; height: 28px; }
.tab + .tab:not(.active)::after { content: ""; width: 2px; height: 16px; background: #d9dae0; margin-left: 13px; }
.tab.active { width: 232px; height: 34px; margin: 6px 6px 0 0; padding-bottom: 5px; background: #d9dae0; border-radius: 10px 10px 0 0; }
.tab.active::before, .tab.active::after { content: ""; position: absolute; bottom: 0; width: 10px; height: 10px; }
.tab.active::before { left: -10px; background: radial-gradient(circle at 0 0, transparent 9.5px, #d9dae0 10px); }
.tab.active::after { right: -10px; background: radial-gradient(circle at 100% 0, transparent 9.5px, #d9dae0 10px); }
.fav { width: 16px; height: 16px; }
.tab-title { width: 168px; margin-left: 8px; white-space: nowrap; }
.t1 { letter-spacing: -.12px; }
.active .tab-title { width: 145px; }
.active .rec { margin-left: 8px; }
.active .tx { margin-left: 13px; }
.fade { -webkit-mask-image: linear-gradient(90deg, #000 148px, transparent 170px); mask-image: linear-gradient(90deg, #000 148px, transparent 170px); }
.tx { width: 9px; height: 9px; margin-left: 12px; stroke-width: 2.2; color: #1f1f1f; }
.newtab { margin-left: 8px; }
.wincontrols { margin-left: auto; display: flex; gap: 34px; padding-right: 17px; }
.wincontrols svg { width: 12px; height: 12px; }

/* address bar */
.toolbar { height: 47px; background: #d9dae0; border-bottom: 1px solid #adafb5; display: flex; align-items: center; padding-left: 14px; }
.nav { display: flex; gap: 20px; }
.nav svg { width: 16px; height: 16px; }
.omnibox { width: 1000px; height: 34px; margin-left: 18px; border-radius: 17px; background: #f6f8fa; display: flex; align-items: center; padding-left: 5px; }
.siteinfo { width: 24px; height: 24px; border-radius: 50%; background: #d9dae0; display: grid; place-items: center; }
.url { margin-left: 8px; width: 890px; white-space: nowrap; font-size: 13.3px; letter-spacing: .12px; color: #66696f; }
.url b { font-weight: 400; color: #1f1f1f; letter-spacing: -.15px; }
.omic { color: #55585e; margin-left: 11px; }
.star { margin-left: 17px; }
.exts { display: flex; align-items: center; margin-left: 17px; }
.exts svg:nth-of-type(2) { margin-left: 19px; }
.vsep { width: 2px; height: 16px; background: #a6a9b6; margin-left: 16px; }
.exts svg:nth-of-type(3) { margin-left: 18px; }
.exts svg:nth-of-type(4) { margin-left: 19px; }
.profile { width: 20px; height: 20px; border-radius: 50%; background: #5c6bc0; color: #fff; font-size: 10.5px; display: grid; place-items: center; margin: 0 24px 0 18px; }

/* meeting controls */
.meetbar { height: 61px; border-bottom: 1px solid #dcdcdc; display: flex; align-items: center; padding-left: 20px; background: #fff; }
.recording { margin-left: 16px; }
.clock { margin-left: 12px; font-size: 13.2px; letter-spacing: -.25px; color: #424242; }
.controls { margin-left: auto; height: 60px; display: flex; align-items: flex-start; padding-right: 20px; }
.ctl { display: flex; flex-direction: column; align-items: center; height: 60px; padding-top: 12px; font-size: 10.9px; letter-spacing: -.25px; line-height: 16px; color: #424242; }
.ctl svg { width: 22px; height: 22px; color: #333; }
.ctl > span { margin-top: 2px; white-space: nowrap; }
.w77 { width: 77px; } .w48 { width: 48px; } .w64 { width: 64px; } .w51 { width: 51px; } .w49 { width: 49px; }
.ctl.off { color: #bdbdbd; letter-spacing: -.35px; }
.on::after { content: ""; width: 46px; height: 3px; border-radius: 2px; margin-top: 3px; background: #5b5fc7; box-shadow: 0 -1px 4px #8b8fe0; }
.count { display: flex; gap: 2px; align-items: center; }
.count b { font-size: 12.6px; font-weight: 700; }
.ctl .more { width: 18px; }
.csep { width: 1px; height: 32px; background: #dcdcdc; margin: 14px 11px 0 12px; }
.leave { width: 92px; height: 32px; margin: 14px 0 0 14px; border-radius: 4px; background: #d13438; color: #fff; font-size: 12.9px; letter-spacing: -.15px; font-weight: 700; display: flex; align-items: center; justify-content: center; gap: 8px; }

.main { height: 572px; display: flex; background: #f4f4f4; }
.stage { width: 798px; padding: 63px 0 0 5px; }
.shared { position: relative; width: 791px; height: 445px; background: #fdfdfd; overflow: hidden; color: #555; }

/* file explorer */
.explorer { height: 415px; display: flex; flex-direction: column; font-size: 7.3px; }
.ex-tabs { height: 20px; background: #e6e6e6; display: flex; align-items: center; }
.ex-tab { width: 148px; height: 19px; margin: 1px 0 0 5px; background: #f8f8f8; border-radius: 4px 4px 0 0; display: flex; align-items: center; gap: 6px; padding-left: 6px; font-weight: 600; font-size: 7.5px; color: #333; }
.ex-tab span { width: 104px; white-space: nowrap; letter-spacing: -.18px; }
.ex-plus { margin-left: 11px; }
.ex-win { margin-left: auto; display: flex; gap: 20px; padding-right: 11px; }
.ex-win svg { width: 8px; height: 8px; }
.ex-addr { height: 30px; display: flex; align-items: center; background: #f6f6f6; border-bottom: 1px solid #dedede; }
.ex-back { margin: 0 0 0 12px; }
.crumb, .find { height: 19px; background: #fdfdfd; display: flex; align-items: center; font-size: 8.4px; color: #444; }
.crumb { width: 76px; margin-left: 493px; padding-left: 9px; font-size: 7.8px; font-weight: 600; }
.find { width: 190px; margin-left: 5px; padding: 0 9px 0 9px; justify-content: space-between; color: #666; white-space: nowrap; }
.ex-cmd { height: 34px; display: flex; align-items: center; border-bottom: 1px solid #dedede; font-size: 7.3px; font-weight: 600; color: #555; letter-spacing: -.1px; }
.ex-new { margin-left: 13px; }
.rot { margin-left: 514px; }
.ex-cmd span { margin-left: 5px; }
.ex-cmd i { width: 1px; height: 20px; background: #e6e6e6; margin-left: 11px; }
.cdots { margin-left: 9px; }
.det { margin-left: auto; }
.ex-cmd .det + span { margin-right: 16px; }
.ex-body { height: 317px; display: flex; }
.side { width: 180px; padding-top: 5px; }
.sr { height: 19.6px; display: flex; align-items: center; padding-left: 21px; }
.sr svg { width: 10px; height: 10px; }
.sr.arrow { padding-left: 6px; gap: 10px; }
.sr.arrow::before { content: ""; width: 4px; height: 4px; border: solid #888; border-width: 1px 1px 0 0; transform: rotate(45deg); margin-left: 1px; }
.sr.sel { background: #d2d2d2; height: 17px; }
.side hr { border: 0; border-top: 1px solid #dcdcdc; margin: 9px 0 9px 7px; }
.side hr:nth-last-of-type(1) { margin-top: 10px; }
.files { width: 161px; margin-left: 343px; font-size: 7.1px; color: #808080; }
.fr { height: 19.38px; display: flex; justify-content: space-between; align-items: center; padding: 0 12px 0 18px; white-space: nowrap; }
.fr.head { margin-bottom: 1px; color: #7c8597; justify-content: flex-start; }
.head span:first-child { width: 81px; border-right: 1px solid #ededed; }
.head span:last-child { padding-left: 3px; }
.fr.sel { background: linear-gradient(#d4d4d4, #d4d4d4) 0 50% / 151px 17px no-repeat; }
.scroll { width: 11px; margin-left: auto; background: #f0eff0; padding: 10px 0 0 3px; }
.scroll i { display: block; width: 5px; height: 252px; background: #7d7d7d; }
.side, .files { flex: none; }
.ex-status { height: 14px; display: flex; justify-content: space-between; align-items: center; padding: 0 6px 0 9px; font-size: 6.9px; }
.views { display: flex; align-items: center; gap: 3px; }

/* photo viewer */
.photos { position: absolute; left: 29px; top: 21px; width: 494px; height: 390px; background: #fdfdfd; border-radius: 4px; overflow: hidden; }
.shared .photos { box-shadow: 0 0 0 1px #a6a6a6, 0 3px 16px rgba(0,0,0,.45); }
.ph-title { height: 19px; background: #f1f1f1; display: flex; align-items: center; justify-content: space-between; padding: 0 10.500px 1px 7px; font-size: 7.4px; color: #333; }
.ph-win { display: flex; gap: 20.300px; }
.ph-win svg { width: 8px; height: 8px; }
.ph-bar { height: 30px; display: flex; align-items: center; font-size: 7.6px; color: #333; }
.seeall { width: 80px; height: 30px; background: #0070d8; color: #e2f0fd; display: flex; align-items: center; gap: 6px; padding-left: 7px; font-size: 7.2px; white-space: nowrap; }
.plus { margin-left: 7px; }
.addto { margin-left: 4px; width: 24px; white-space: nowrap; }
.tools { display: flex; align-items: center; margin-left: 48.500px; gap: 28.200px; }
.tools svg { width: 14px; height: 14px; }
.tools .edit { width: 12px; height: 12px; margin-left: 3px; }
.tools .chev { width: 6px; height: 4px; margin: -4px -6.500px 0 -23px; }
.tools svg:last-child { width: 11px; height: 4px; margin-left: -4px; }
.dlabels { font-family: "Liberation Sans", Arial, sans-serif; font-size: 10.8px; text-anchor: middle; fill: #1a1a1a; stroke: #1a1a1a; stroke-width: .15px; }

.inner-bar { height: 30px; display: flex; align-items: center; background: linear-gradient(90deg, #dfeaf7, #e7e6f6 45%, #e2e6f5 70%, #e2eff9); }
.widget { margin-left: 6px; }
.ib-icons { display: flex; margin-left: 116px; }
.ib-icons span { position: relative; width: 27.25px; height: 30px; display: grid; place-items: center; }
.ib-icons span svg { width: 15px; height: 15px; color: #222; }
.ib-icons span svg.tv { width: 13px; height: 13px; }
.ib-icons span svg.dia { width: 16px; height: 16px; }
.run::after { content: ""; position: absolute; bottom: 3px; left: 12px; width: 4px; height: 1.5px; border-radius: 1px; background: #777; }
.ib-icons .cur { background: linear-gradient(#f4f7fc, #f4f7fc) 50% 50% / 22px 24px no-repeat; }
.cur::after { left: 9px; width: 10px; background: #0067c0; }
.ib-icons em { position: absolute; right: 3px; top: 4px; width: 10px; height: 10px; border-radius: 50%; background: #c4382c; color: #fff; font: 7px/10px "Open Sans"; text-align: center; }
.redsq { position: absolute; right: 3px; top: 4px; width: 10px; height: 10px; background: rgba(240,60,60,.68); }
.ib-tray { display: flex; align-items: center; gap: 4px; color: #222; margin-left: 12px; }
.ib-tray svg:first-child { margin-right: 8px; }
.ib-tray .blue { color: #2368b4; margin-right: 6px; }
.ib-tray p { font-size: 7px; line-height: 10px; text-align: right; width: 42px; letter-spacing: -.05px; }

.pills { display: flex; gap: 8px; padding: 27px 0 0 8px; }
.pill { height: 24px; border-radius: 4px; background: #7b7b7b; color: #fff; font-size: 11.3px; line-height: 24px; width: 97px; text-align: center; white-space: nowrap; }
.zoomer { width: 66px; display: flex; justify-content: center; align-items: center; gap: 19px; }
.zoomer svg { width: 12px; height: 12px; }

/* participants */
.roster { width: 249px; border-right: 1px solid #dcdcdc; overflow: hidden; padding-left: 2px; display: flex; flex-direction: column; }
.people-grid { display: grid; grid-template-columns: 110px 110px; grid-auto-rows: 110px; padding: 58px 0 0 11px; }
.p { display: flex; flex-direction: column; align-items: center; }
.av { width: 70px; height: 70px; border-radius: 50%; display: grid; place-items: center; padding-bottom: 1.500px; font-size: 26px; font-weight: 600; box-shadow: 0 1px 3px rgba(0,0,0,.2); }
.speaking { background: #949494; color: #fff; position: relative; box-shadow: 0 0 0 2px #d5d5ea, 0 0 0 5px #5b5fc7, 0 0 70px 20px rgba(105,108,220,.24); }
.ag { background: #f5d4e0; color: #771a3b; }
.ng { background: #e1deec; color: #40385f; }
.pk { background: #e8dcd8; color: #543526; }
.ab { background: #daeef1; color: #2e6469; }
.all { background: #fff; border: 1px solid #ccc; box-shadow: none; }
.p:nth-child(n+2) { position: relative; }
.nm { font-size: 11.25px; line-height: 16px; margin-top: 9px; height: 16px; white-space: nowrap; color: #363636; display: flex; align-items: center; justify-content: center; }
.nm.cut { width: 94px; justify-content: space-between; }
.nm svg { width: 13px; height: 13px; margin: 0 2px 2px 0; }
.selfview { width: 241px; height: 133px; margin-top: auto; margin-bottom: 5px; background: #e6e6e6; display: grid; place-items: center; }
.selfview span { width: 56px; height: 56px; border-radius: 50%; background: #dbe1d6; color: #34421f; font-size: 21px; font-weight: 600; display: grid; place-items: center; }

/* chat */
.chat { width: 319px; background: #fff; display: flex; flex-direction: column; }
.notice { height: 62px; background: #efefef; border: solid #dcdcdc; border-width: 0 1px 1px 1px; border-radius: 2px; display: flex; justify-content: space-between; align-items: center; padding: 0 9px 0 16px; font-size: 11.3px; line-height: 17px; white-space: nowrap; }
.notice svg, .chat-head svg { width: 14px; height: 14px; color: #444; }
.chat-head { height: 61px; border-bottom: 1px solid #dcdcdc; display: flex; align-items: center; justify-content: space-between; padding: 3px 29px 0 20px; }
.chat-head h2 { font-size: 15.2px; font-weight: 700; letter-spacing: -.1px; }
.msgs { padding-left: 32px; height: 364px; }
.bubble { position: relative; width: 209px; background: #f4f4f4; border-radius: 5px; padding: 7px 0 9px 16px; font-size: 13.350px; line-height: 20px; white-space: nowrap; }
.bubble.clipped { border-radius: 0 0 5px 5px; padding-top: 3px; }
.meta { height: 30px; padding-top: 12px; line-height: 17px; font-size: 11.350px; color: #616161; white-space: nowrap; }
.meta time { margin-left: 8px; }
.mini { position: absolute; left: -16px; top: 2px; width: 28px; height: 28px; border-radius: 50%; display: grid; place-items: center; font-size: 10.500px; font-weight: 700; }
.mpk { background: #e8dcd8; color: #6a4a3c; }
.msd { background: #daeef1; color: #3d7378; }
.mun { background: #949494; color: #fff; }
.composer { width: 287px; height: 43px; margin-left: 16px; border: 1px solid #d6d6d6; border-radius: 4px; padding-left: 12px; font-size: 13.200px; line-height: 41px; color: #616161; }
.compose-tools { display: flex; align-items: center; padding: 8px 24px 0 24px; gap: 15px; }
.sm { color: #444; }
.send { margin-left: auto; }

/* desktop taskbar */
.taskbar { height: 48px; border-top: 1px solid #adadad; display: flex; align-items: center; padding-bottom: 1px; background: linear-gradient(90deg, #e0e0e2 0, #d9dadb 380px, #e3d2d9 460px, #ecd5de 620px, #e9d5df 820px, #d9d3e0 1010px, #eadbe0 1080px, #f2e1da 1150px, #dcd9da 1240px, #d5d5d5 100%); color: #1b1b1b; }
.start { margin-left: 406px; }
.search { width: 218px; height: 31px; margin-left: 14px; border: 1px solid #d0c6cb; border-radius: 16px; background: #f8f3f5; display: flex; align-items: center; padding: 0 4px 0 10px; font-size: 13px; color: #555; }
.slens { color: #222; }
.search span { margin-left: 10px; letter-spacing: -.1px; }
.art { margin-left: auto; }
.apps { display: flex; margin-left: 4px; }
.apps span { position: relative; width: 43.8px; height: 40px; display: grid; place-items: center; }
.apps svg { width: 22px; height: 24px; }
.apps em { position: absolute; left: 16px; top: 23px; background: #f8c712; border-radius: 2px; font: 700 7px/9px "Open Sans"; padding: 0 2px; letter-spacing: .2px; }
.apps .open { background: linear-gradient(#f4ecf0, #f4ecf0) 50% 50% / 38px 38px no-repeat; }
.apps .open::after { content: ""; position: absolute; bottom: 1px; left: 14px; width: 16px; height: 3px; border-radius: 2px; background: #0067b8; }
.apps .open b { position: absolute; left: 23px; top: 3px; width: 15px; height: 15px; border-radius: 50%; background: #5566b5; color: #fff; font-size: 8px; font-weight: 400; line-height: 15px; text-align: center; }
.tray { display: flex; align-items: center; margin-left: 70px; font-size: 11.400px; line-height: 16px; white-space: nowrap; }
.cloud { margin-left: 18px; }
.tmic { margin-left: 17px; color: #24509c; }
.lang { margin-left: 20px; width: 24px; text-align: center; }
.twifi { margin-left: 18px; }
.tspk { margin-left: 8px; }
.tbat { margin-left: 7px; }
.date { width: 78px; text-align: right; }
.tbell { margin-left: 9px; }
```
